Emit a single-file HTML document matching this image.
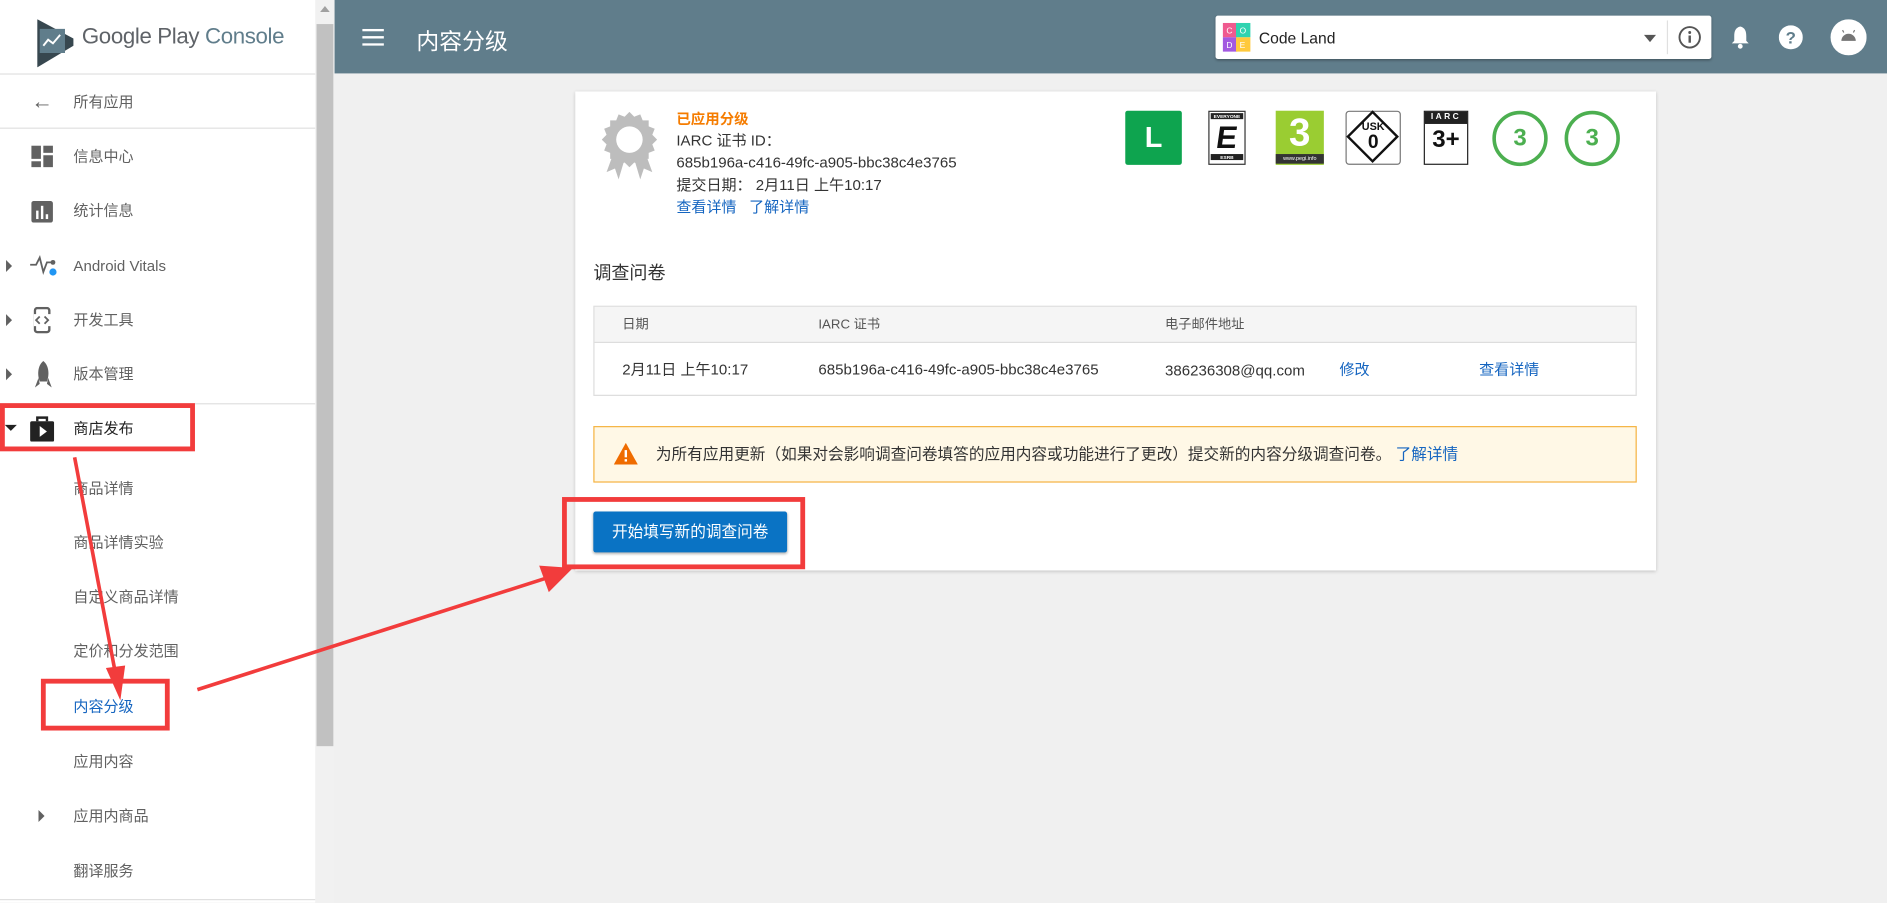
<!DOCTYPE html>
<html><head><meta charset="utf-8">
<style>
html,body{margin:0;padding:0;width:1887px;height:903px;overflow:hidden;background:#f0f0f0;}
#w{position:absolute;left:0;top:0;width:1568px;height:750px;transform:scale(1.2035);transform-origin:0 0;font-family:"Liberation Sans","Noto Sans CJK SC",sans-serif;background:#f0f0f0;}
.a{position:absolute;}
.sb{left:0;top:0;width:262px;height:750px;background:#fff;}
.it{position:absolute;left:61px;font-size:12.5px;color:#616161;white-space:nowrap;line-height:16px;}
.hr{position:absolute;left:0;width:262px;height:1px;background:#e0e0e0;}
.tri{position:absolute;left:5px;width:0;height:0;border-top:5px solid transparent;border-bottom:5px solid transparent;border-left:5px solid #616161;}
.red{position:absolute;border:4px solid #f23c3c;box-sizing:border-box;}
.t{position:absolute;font-size:12.5px;color:#333;white-space:nowrap;line-height:16px;}
.lk{color:#1565c0;}
</style></head><body><div id="w">
<div class="a sb">
 <svg class="a" style="left:30px;top:16px" width="32" height="40" viewBox="0 0 32 40"><path d="M1 0 L31 16 L31 22 L1 40 Z" fill="#37474f"/><path d="M3 8 L24 8 L24 28 L3 28Z" fill="#607d8b"/><path d="M6 22 L10 17 L14 20 L20 13" stroke="#fff" stroke-width="1.6" fill="none"/></svg>
 <div class="a" style="left:68px;top:19px;font-size:18.5px;color:#5f6368;white-space:nowrap;letter-spacing:-0.3px">Google Play <span style="color:#607d8b">Console</span></div>
 <div class="hr" style="top:61px"></div>
 <div class="a" style="left:26px;top:74px;font-size:18px;color:#616161">←</div>
 <div class="it" style="top:77px">所有应用</div>
 <div class="hr" style="top:106px"></div>
 <svg class="a" style="left:26px;top:121px" width="18" height="18"><rect x="0" y="0" width="8" height="11" fill="#616161"/><rect x="10" y="0" width="8" height="6" fill="#616161"/><rect x="10" y="8" width="8" height="10" fill="#616161"/><rect x="0" y="13" width="8" height="5" fill="#616161"/></svg>
 <div class="it" style="top:122px">信息中心</div>
 <svg class="a" style="left:26px;top:167px" width="18" height="18"><rect width="18" height="18" rx="2" fill="#616161"/><rect x="4" y="8" width="2" height="7" fill="#fff"/><rect x="8" y="4" width="2" height="11" fill="#fff"/><rect x="12" y="11" width="2" height="4" fill="#fff"/></svg>
 <div class="it" style="top:167px">统计信息</div>
 <div class="tri" style="top:216px"></div>
 <svg class="a" style="left:25px;top:210px" width="24" height="22"><path d="M0 10 H5 L8 4 L11 16 L14 8 L18 8" stroke="#616161" stroke-width="1.5" fill="none"/><circle cx="19" cy="8" r="2" fill="#616161"/><circle cx="19" cy="16" r="3" fill="#2196f3"/></svg>
 <div class="it" style="top:213px">Android Vitals</div>
 <div class="tri" style="top:261px"></div>
 <svg class="a" style="left:28px;top:255px" width="14" height="22"><rect x="1" y="1" width="12" height="20" rx="2" fill="none" stroke="#616161" stroke-width="2"/><rect x="0" y="6" width="14" height="10" fill="#fff"/><path d="M5 8 L2 11 L5 14 M9 8 L12 11 L9 14" stroke="#616161" stroke-width="1.5" fill="none"/></svg>
 <div class="it" style="top:258px">开发工具</div>
 <div class="tri" style="top:306px"></div>
 <svg class="a" style="left:29px;top:300px" width="14" height="22"><path d="M7 0 C12 4 12 12 10 17 H4 C2 12 2 4 7 0Z" fill="#616161"/><path d="M3 14 L0 22 L4 19 Z M11 14 L14 22 L10 19Z" fill="#616161"/></svg>
 <div class="it" style="top:303px">版本管理</div>
 <div class="hr" style="top:335px"></div>
 <div class="a" style="left:4px;top:353px;width:0;height:0;border-left:5px solid transparent;border-right:5px solid transparent;border-top:5px solid #222"></div>
 <svg class="a" style="left:25px;top:345px" width="20" height="22"><path d="M6 5 V2 H14 V5" stroke="#222" stroke-width="2" fill="none"/><rect x="0" y="5" width="20" height="17" rx="1.5" fill="#222"/><path d="M8 9 L14 13.5 L8 18Z" fill="#fff"/></svg>
 <div class="it" style="top:348px;color:#222">商店发布</div>
 <div class="it" style="top:398px">商品详情</div>
 <div class="it" style="top:443px">商品详情实验</div>
 <div class="it" style="top:488px">自定义商品详情</div>
 <div class="it" style="top:533px">定价和分发范围</div>
 <div class="it" style="top:579px;color:#1565c0">内容分级</div>
 <div class="it" style="top:625px">应用内容</div>
 <div class="tri" style="top:673px;left:32px"></div>
 <div class="it" style="top:670px">应用内商品</div>
 <div class="it" style="top:716px">翻译服务</div>
 <div class="hr" style="top:747px"></div>
</div>
<div class="a" style="left:262px;top:0;width:16px;height:750px;background:#f1f1f1"></div>
<div class="a" style="left:263px;top:20px;width:14px;height:600px;background:#c1c1c1"></div>
<div class="a" style="left:266px;top:5px;width:0;height:0;border-left:4px solid transparent;border-right:4px solid transparent;border-bottom:5px solid #a0a0a0"></div>
<div class="a" style="left:278px;top:0;width:1290px;height:61px;background:#607d8b"></div>
<svg class="a" style="left:301px;top:24px" width="18" height="14"><rect y="0" width="18" height="2" fill="#fff"/><rect y="6" width="18" height="2" fill="#fff"/><rect y="12" width="18" height="2" fill="#fff"/></svg>
<div class="a" style="left:346px;top:20px;font-size:19px;color:#fff;white-space:nowrap">内容分级</div>
<div class="a" style="left:1010px;top:13px;width:412px;height:36px;background:#fff;border-radius:2px;box-shadow:0 1px 2px rgba(0,0,0,.3)"></div>
<svg class="a" style="left:1016px;top:19px" width="23" height="24"><rect x="0" y="0" width="12" height="12" fill="#ef5a8f"/><rect x="11" y="0" width="12" height="12" fill="#2fd3b0"/><rect x="0" y="12" width="12" height="12" fill="#a259e0"/><rect x="11" y="12" width="12" height="12" fill="#ffc93c"/><text x="3" y="9" font-size="7" fill="#fff" font-family="Liberation Sans">C</text><text x="14" y="9" font-size="7" fill="#fff" font-family="Liberation Sans">O</text><text x="3" y="21" font-size="7" fill="#fff" font-family="Liberation Sans">D</text><text x="14" y="21" font-size="7" fill="#fff" font-family="Liberation Sans">E</text></svg>
<div class="a" style="left:1046px;top:24px;font-size:13px;color:#222">Code Land</div>
<div class="a" style="left:1366px;top:29px;width:0;height:0;border-left:5px solid transparent;border-right:5px solid transparent;border-top:6px solid #555"></div>
<div class="a" style="left:1385px;top:17px;width:1px;height:28px;background:#e0e0e0"></div>
<svg class="a" style="left:1394px;top:21px" width="20" height="20"><circle cx="10" cy="10" r="8.5" fill="none" stroke="#555" stroke-width="1.6"/><rect x="9" y="8.5" width="2" height="6" fill="#555"/><circle cx="10" cy="6" r="1.2" fill="#555"/></svg>
<svg class="a" style="left:1438px;top:21px" width="16" height="20"><path d="M8 1 C12 2 13 5 13 9 V13 L15 15 H1 L3 13 V9 C3 5 4 2 8 1Z" fill="#fff"/><circle cx="8" cy="17.5" r="2" fill="#fff"/></svg>
<svg class="a" style="left:1478px;top:21px" width="20" height="20"><circle cx="10" cy="10" r="10" fill="#fff"/><text x="10" y="15" text-anchor="middle" font-size="14" font-weight="bold" fill="#607d8b" font-family="Liberation Sans">?</text></svg>
<svg class="a" style="left:1521px;top:16px" width="30" height="30"><circle cx="15" cy="15" r="15" fill="#fff"/><path d="M9 18 A6 6 0 0 1 21 18Z" fill="#757575"/><path d="M11 11 L10 9 M19 11 L20 9" stroke="#757575"/></svg>
<div class="a" style="left:478px;top:76px;width:898px;height:398px;background:#fff;box-shadow:0 1px 3px rgba(0,0,0,.2)"></div>
<svg class="a" style="left:500px;top:93px" width="46" height="58" viewBox="0 0 46 58"><path d="M12 28 L4 50 L11 47 L14 56 L20 36Z M34 28 L42 50 L35 47 L32 56 L26 36Z" fill="#bdbdbd"/><polygon points="23,0 27,4 32,2 34,7 39,7 39,12 44,14 42,19 46,23 42,27 44,32 39,34 39,39 34,39 32,44 27,42 23,46 19,42 14,44 12,39 7,39 7,34 2,32 4,27 0,23 4,19 2,14 7,12 7,7 12,7 14,2 19,4" fill="#bdbdbd"/><circle cx="23" cy="23" r="11" fill="#fff"/></svg>
<div class="t" style="left:562px;top:91px;color:#f57c00;font-weight:bold;font-size:12px">已应用分级</div>
<div class="t" style="left:562px;top:109px">IARC 证书 ID：</div>
<div class="t" style="left:562px;top:127px">685b196a-c416-49fc-a905-bbc38c4e3765</div>
<div class="t" style="left:562px;top:146px">提交日期：&nbsp;2月11日 上午10:17</div>
<div class="t lk" style="left:562px;top:164px">查看详情&nbsp;&nbsp;&nbsp;了解详情</div>
<div class="a" style="left:935px;top:92px;width:47px;height:45px;background:#0ea44f;border-radius:2px;color:#fff;font:bold 24px 'Liberation Sans';text-align:center;line-height:45px">L</div>
<div class="a" style="left:1004px;top:92px;width:31px;height:45px;background:#fff;border:1.5px solid #333;box-sizing:border-box">
 <div style="font:bold 4px 'Liberation Sans';text-align:center;background:#222;color:#fff;margin:1px">EVERYONE</div>
 <div style="font:bold 26px 'Liberation Sans';color:#111;text-align:center;line-height:28px;transform:skewX(-8deg)">E</div>
 <div style="font:bold 4px 'Liberation Sans';text-align:center;background:#222;color:#fff;margin:0 1px">ESRB</div></div>
<div class="a" style="left:1060px;top:92px;width:40px;height:45px;background:#9acd32;color:#fff;font:bold 32px 'Liberation Sans';text-align:center;line-height:36px">3<div style="background:#333;font:4.5px 'Liberation Sans';line-height:8px;color:#fff">www.pegi.info</div></div>
<div class="a" style="left:1118px;top:92px;width:46px;height:45px;border:1px solid #777;border-radius:3px;box-sizing:border-box;background:#fff"></div>
<div class="a" style="left:1125px;top:98px;width:31px;height:31px;border:2px solid #111;transform:rotate(45deg);box-sizing:border-box"></div>
<div class="a" style="left:1118px;top:100px;width:46px;text-align:center;font:bold 9px 'Liberation Sans';color:#111;line-height:10px">USK<br><span style="font-size:16px;line-height:18px">0</span></div>
<div class="a" style="left:1183px;top:92px;width:37px;height:45px;border:1.5px solid #222;box-sizing:border-box;background:#fff">
 <div style="background:#222;color:#fff;font:bold 7px 'Liberation Sans';letter-spacing:2px;text-align:center;line-height:10px">IARC</div>
 <div style="font:bold 20px 'Liberation Sans';color:#111;text-align:center;line-height:26px">3+</div></div>
<div class="a" style="left:1240px;top:92px;width:46px;height:46px;border:3px solid #4caf50;border-radius:50%;box-sizing:border-box;color:#4caf50;font:bold 20px 'Liberation Sans';text-align:center;line-height:40px">3</div>
<div class="a" style="left:1300px;top:92px;width:46px;height:46px;border:3px solid #4caf50;border-radius:50%;box-sizing:border-box;color:#4caf50;font:bold 20px 'Liberation Sans';text-align:center;line-height:40px">3</div>
<div class="t" style="left:493px;top:219px;font-size:15px;line-height:18px">调查问卷</div>
<div class="a" style="left:493px;top:254px;width:867px;height:75px;border:1px solid #ddd;box-sizing:border-box"></div>
<div class="a" style="left:494px;top:255px;width:865px;height:29px;background:#f5f5f5;border-bottom:1px solid #ddd"></div>
<div class="t" style="left:517px;top:262px;font-size:11px;color:#555">日期</div>
<div class="t" style="left:680px;top:262px;font-size:11px;color:#555">IARC 证书</div>
<div class="t" style="left:968px;top:262px;font-size:11px;color:#555">电子邮件地址</div>
<div class="t" style="left:517px;top:299px">2月11日 上午10:17</div>
<div class="t" style="left:680px;top:299px">685b196a-c416-49fc-a905-bbc38c4e3765</div>
<div class="t" style="left:968px;top:300px">386236308@qq.com</div>
<div class="t lk" style="left:1113px;top:299px">修改</div>
<div class="t lk" style="left:1229px;top:299px">查看详情</div>
<div class="a" style="left:493px;top:354px;width:867px;height:47px;background:#fff8e6;border:1px solid #f5b342;box-sizing:border-box"></div>
<svg class="a" style="left:510px;top:368px" width="20" height="18"><path d="M10 0 L20 18 H0Z" fill="#ef6c00"/><rect x="9" y="6" width="2" height="6" fill="#fff"/><rect x="9" y="13.5" width="2" height="2" fill="#fff"/></svg>
<div class="t" style="left:545px;top:370px;font-size:13px">为所有应用更新（如果对会影响调查问卷填答的应用内容或功能进行了更改）提交新的内容分级调查问卷。 <span class="lk">了解详情</span></div>
<div class="a" style="left:493px;top:425px;width:161px;height:34px;background:#0a73c4;border-radius:2px;box-shadow:0 1px 2px rgba(0,0,0,.3);color:#fff;font-size:13px;text-align:center;line-height:34px">开始填写新的调查问卷</div>
<div class="red" style="left:0;top:335px;width:162px;height:40px"></div>
<div class="red" style="left:34px;top:564px;width:107px;height:43px"></div>
<div class="red" style="left:467px;top:413px;width:202px;height:60px"></div>
<svg class="a" style="left:0;top:0" width="700" height="700"><line x1="62" y1="380" x2="96" y2="560" stroke="#f23c3c" stroke-width="3"/><path d="M88 555 L104 553 L100 582Z" fill="#f23c3c"/><line x1="164" y1="573" x2="455" y2="480" stroke="#f23c3c" stroke-width="3"/><path d="M448 470 L476 472 L456 492Z" fill="#f23c3c"/></svg>
</div></body></html>
